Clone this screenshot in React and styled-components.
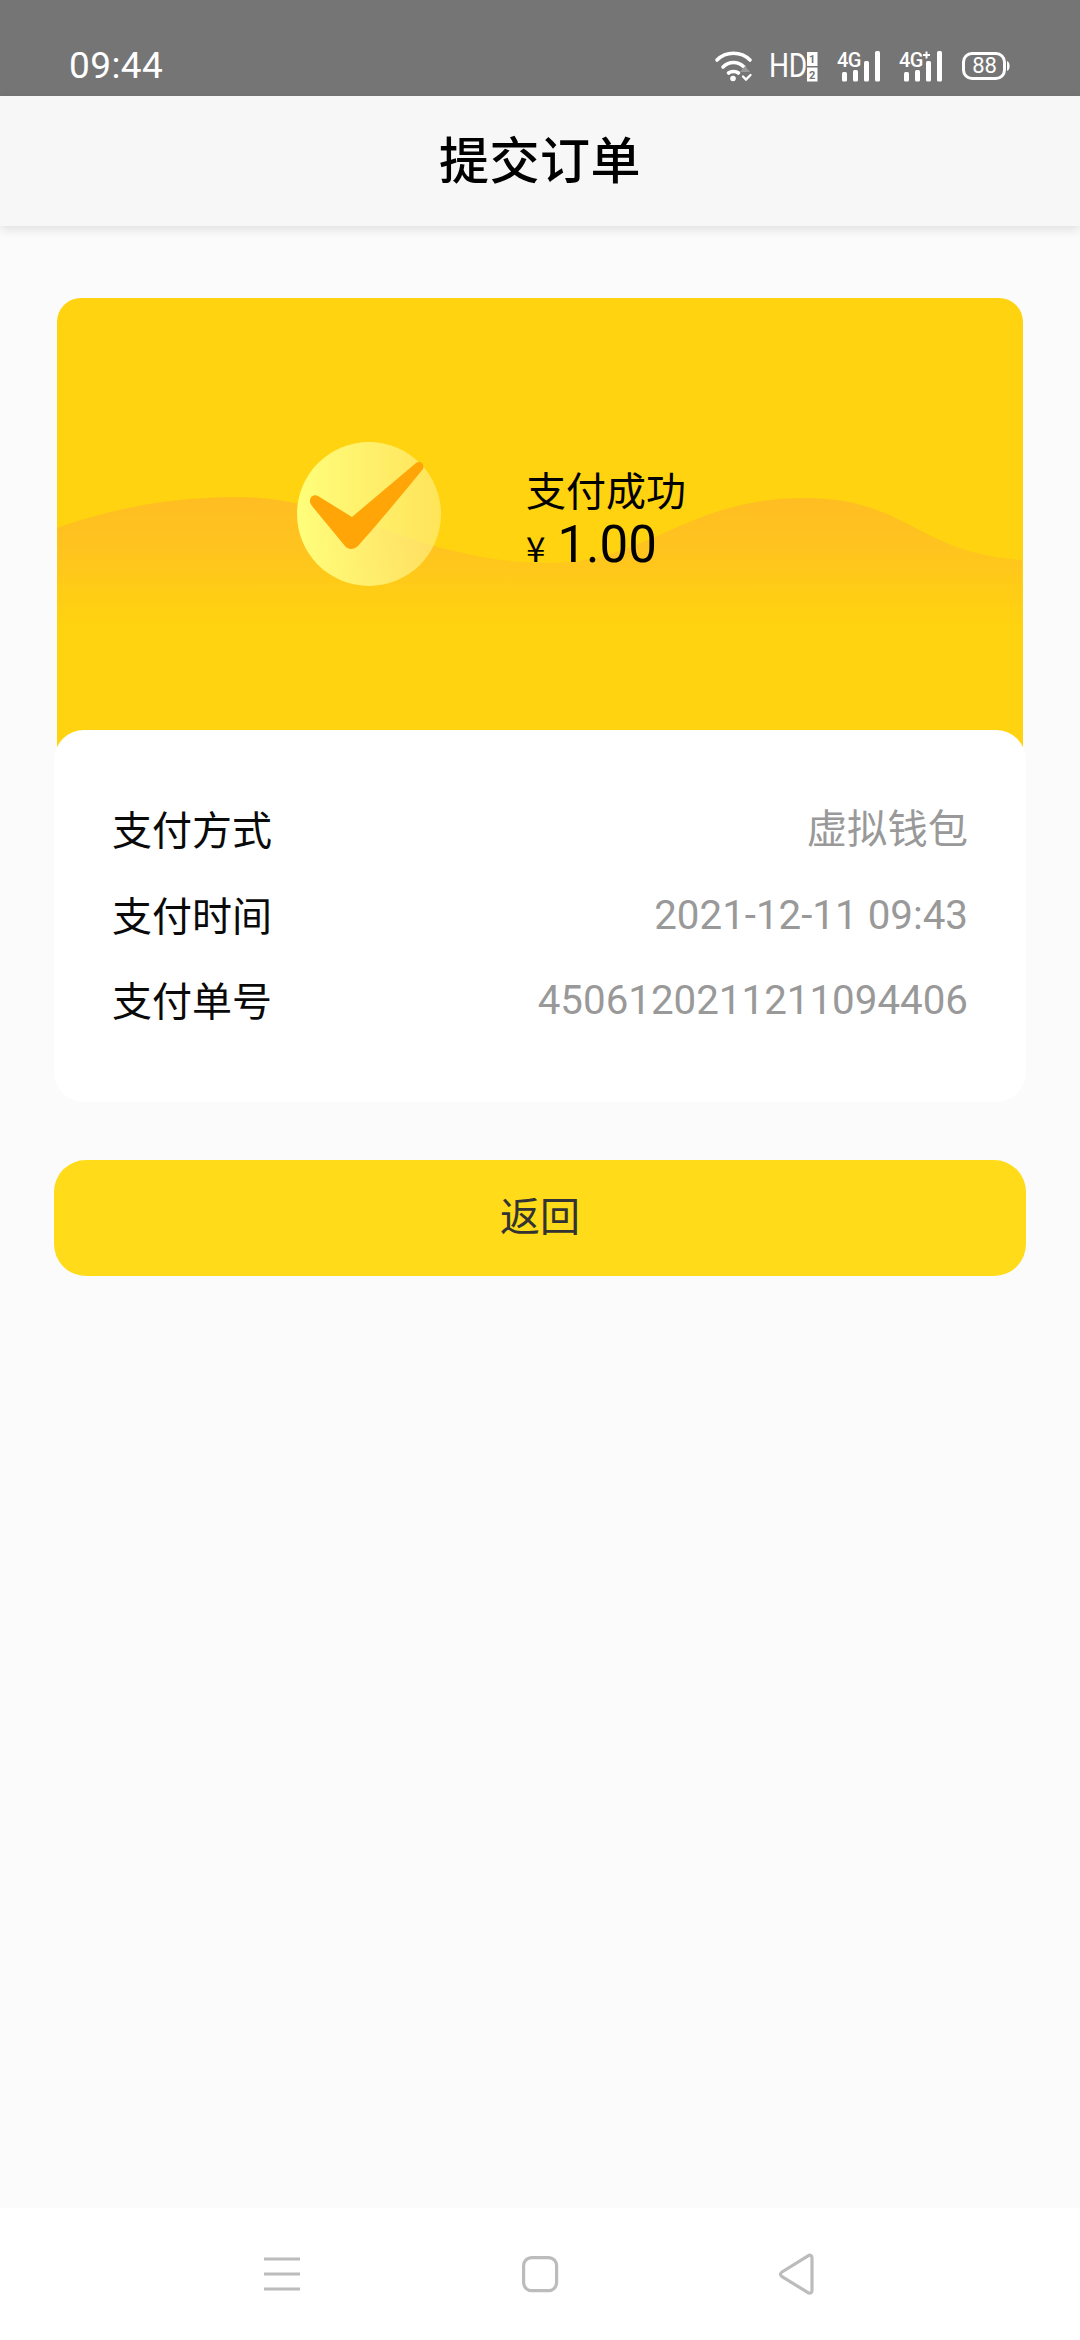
import React from "react";
import styled, { createGlobalStyle } from "styled-components";

const Global = createGlobalStyle`
  html, body { margin: 0; padding: 0; background: #fbfbfb; }
  * { box-sizing: border-box; }
  body { font-family: Roboto, "Noto Sans CJK SC", sans-serif; }
`;
const Page = styled.div`
  width: 1080px; height: 2340px; display: flex; flex-direction: column; background: #fbfbfb; overflow: hidden;
`;
const StatusBar = styled.div`
  height: 96px; flex: none; background: #757575; display: flex; align-items: flex-start; justify-content: space-between;
  padding: 46px 65px 0 69px; color: #fff;
`;
const Time = styled.span`font: 400 37px/40px Roboto, sans-serif; letter-spacing: .4px;`;
const StatusIcons = styled.svg`width: 305px; height: 36px; display: block; margin-top: 2px;`;
const Header = styled.header`
  height: 130px; flex: none; background: #f7f7f7; display: flex; align-items: center; justify-content: center;
  box-shadow: 0 3px 10px rgba(0,0,0,.12); position: relative; z-index: 1; padding-bottom: 8px;
`;
const Title = styled.h1`
  margin: 0; font: 500 50px/64px "Noto Sans CJK SC", sans-serif; color: #000; letter-spacing: .5px;
`;
const Main = styled.main`flex: 1; padding: 72px 54px 0; display: flex; flex-direction: column;`;
const Hero = styled.section`
  height: 452px; margin: 0 3px; background: #ffd30f; border-radius: 24px 24px 0 0; position: relative; overflow: hidden;
  display: flex; align-items: flex-start; padding: 143px 0 0 239px;
`;
const Wave = styled.svg`position: absolute; left: 0; top: 190px; width: 965px; height: 262px;`;
const Badge = styled.svg`position: relative; width: 146px; height: 146px; flex: none; overflow: visible;`;
const HeroText = styled.div`position: relative; margin: 24px 0 0 84px; color: #000;`;
const HeroLabel = styled.div`font: 400 40px/48px "Noto Sans CJK SC", sans-serif;`;
const Amount = styled.div`display: flex; align-items: baseline; font: 400 51px/50px Roboto, sans-serif; margin-top: 7px;`;
const Currency = styled.span`font: 400 35px "Noto Sans CJK SC", sans-serif; margin-right: 12px;`;
const Details = styled.section`
  position: relative; margin-top: -20px; height: 372px; background: #fff; border-radius: 30px; padding: 70px 58px 0 58px;
  display: flex; flex-direction: column;
`;
const Row = styled.div`height: 85.5px; display: flex; justify-content: space-between; align-items: flex-start;`;
const Key = styled.span`font: 400 40px/56px "Noto Sans CJK SC", sans-serif; color: #0a0a0a;`;
const Value = styled.span`font: 400 40.3px/56px Roboto, "Noto Sans CJK SC", sans-serif; color: #999; margin-top: 2px;`;
const Back = styled.button`
  margin-top: 58px; height: 116px; border: 0; border-radius: 32px; background: #ffdb19; color: #333;
  font: 400 40px "Noto Sans CJK SC", sans-serif; width: 100%; padding: 0 0 8px;
`;
const NavBar = styled.nav`
  height: 132px; flex: none; background: #fff; display: flex; align-items: flex-start;
  padding: 44px 0 0 262px;
`;
const NavIcon = styled.svg`width: 44px; height: 44px; flex: none; fill: none; stroke: #bcbcbc; stroke-width: 3.2;`;
const NavHome = styled(NavIcon)`margin-left: 215px;`;
const NavBack = styled(NavIcon)`margin-left: 213px;`;

const Signal = ({ x, plus }) => (
  <g transform={`translate(${x} 0)`} fill="#fff">
    <text x="-5" y="67" fontFamily="Roboto, sans-serif" fontSize="20" fontWeight="500" letterSpacing="-.5">4G</text>
    {plus && <path d="M19 54h7v2h-7zM21.500 51.500h2v7h-2z" />}
    <rect x="0" y="72" width="5" height="9.500" rx="1.500" />
    <rect x="11" y="70" width="5" height="11.500" rx="1.500" />
    <rect x="22" y="61" width="5" height="20.500" rx="1.500" />
    <rect x="33" y="51" width="5" height="30.500" rx="1.500" />
  </g>
);

export default function App() {
  return (
    <Page>
      <Global />
      <StatusBar>
        <Time>09:44</Time>
        <StatusIcons viewBox="710 48 305 36">
          <g fill="none" stroke="#fff" strokeWidth="3.600" strokeLinecap="round">
            <path d="M717 60C726 51 741 51 750 60" />
            <path d="M723 67C729 61 738 61 744 67" />
            <path d="M728.500 73C731 71 736 71 738.500 73" />
            <circle cx="733" cy="78.500" r="2.800" fill="#fff" stroke="none" />
            <path d="M745 66l5 6h-10z" fill="#999" stroke="none" />
            <path d="M743 76.500l3 3 4.500-4.500" strokeWidth="2.400" />
          </g>
          <text transform="translate(769 77) scale(.84 1)" fill="#fff" fontFamily="Roboto, sans-serif" fontSize="33.500" letterSpacing="-.5">HD</text>
          <rect x="807" y="52" width="10.500" height="14" fill="#fff" />
          <rect x="807" y="67.500" width="10.500" height="14" fill="#fff" />
          <text x="812.250" y="63" textAnchor="middle" fontSize="11" fontWeight="700" fill="#757575" fontFamily="Roboto, sans-serif">1</text>
          <text x="812.250" y="78.500" textAnchor="middle" fontSize="11" fontWeight="700" fill="#757575" fontFamily="Roboto, sans-serif">2</text>
          <Signal x={842} />
          <Signal x={904} plus />
          <rect x="963.500" y="53.500" width="41" height="25" rx="8.500" fill="none" stroke="#fff" strokeWidth="3" />
          <path d="M1007 61c3.500 1 3.500 9 0 10z" fill="#fff" />
          <text x="984.500" y="73" textAnchor="middle" fontFamily="Roboto, sans-serif" fontSize="22" fill="#fff">88</text>
        </StatusIcons>
      </StatusBar>
      <Header><Title>提交订单</Title></Header>
      <Main>
        <Hero>
          <Wave viewBox="0 0 965 262" preserveAspectRatio="none">
            <defs>
              <linearGradient id="waveFill" x1="0" y1="0" x2="0" y2="1">
                <stop offset="0" stopColor="#ffbd22" />
                <stop offset=".22" stopColor="#ffc41e" />
                <stop offset=".38" stopColor="#ffcd15" />
                <stop offset=".52" stopColor="#ffd30f" />
              </linearGradient>
            </defs>
            <path
              d="M0 40C50 22 110 9 181 9C290 9 360 75 493 75C590 75 630 10 748 10C850 10 860 65 965 72V262H0Z"
              fill="url(#waveFill)"
            />
          </Wave>
          <Badge viewBox="0 0 146 146">
            <defs>
              <linearGradient id="disc" x1="0" y1="0" x2="1" y2="0">
                <stop offset="0" stopColor="#ffff7a" />
                <stop offset="1" stopColor="#fff08a" stopOpacity=".6" />
              </linearGradient>
            </defs>
            <circle cx="73" cy="73" r="72" fill="url(#disc)" />
            <path d="M22 55L56 76L120 22C124 19 129 23 127 28C106 54 84 80 62 105C58 109 52 109 49 105L16 65C11 59 16 52 22 55Z" fill="#ffa508" />
          </Badge>
          <HeroText>
            <HeroLabel>支付成功</HeroLabel>
            <Amount><Currency>¥</Currency>1.00</Amount>
          </HeroText>
        </Hero>
        <Details>
          <Row><Key>支付方式</Key><Value>虚拟钱包</Value></Row>
          <Row><Key>支付时间</Key><Value>2021-12-11 09:43</Value></Row>
          <Row><Key>支付单号</Key><Value>4506120211211094406</Value></Row>
        </Details>
        <Back>返回</Back>
      </Main>
      <NavBar>
        <NavIcon viewBox="0 0 44 44"><path d="M2 7h36M2 22h36M2 37h36" /></NavIcon>
        <NavHome viewBox="0 0 44 44"><rect x="2.600" y="5.600" width="33" height="33" rx="8" /></NavHome>
        <NavBack viewBox="0 0 44 44"><path d="M34 6c0-2.500-2-3.500-4-2.200L4 20c-2 1.300-2 3.300 0 4.600l26 16c2 1.200 4 .2 4-2.200z" /></NavBack>
      </NavBar>
    </Page>
  );
}
